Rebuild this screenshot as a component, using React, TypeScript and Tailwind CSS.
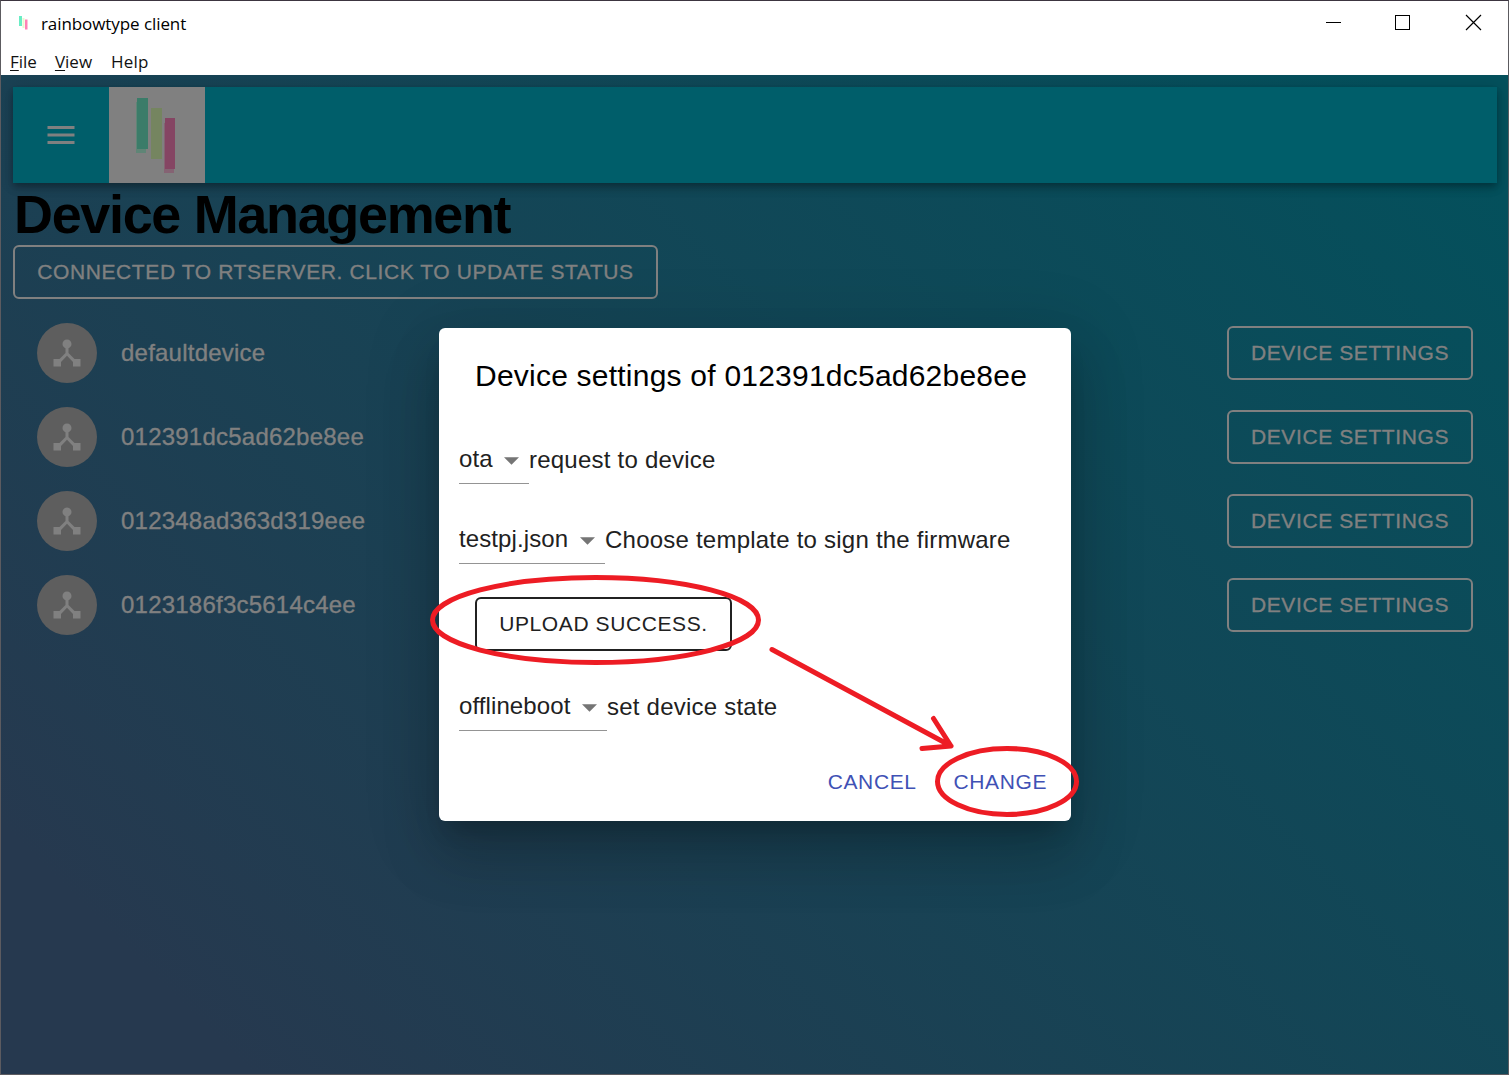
import React from "react";

const devices = ["defaultdevice", "012391dc5ad62be8ee", "012348ad363d319eee", "0123186f3c5614c4ee"];

function Select({ value, label, width }: { value: string; label: string; width: string }) {
  return (
    <div className="flex items-start text-[24px] leading-[29px] tracking-[0.225px] text-[#212121]">
      <div className={`flex h-[40px] items-start justify-between border-b-[1.5px] border-[#949494] ${width}`}>
        <span className="tracking-[0.1px]">{value}</span>
        <svg className="mt-[13px] mr-[10px] h-[8px] w-[15px] shrink-0" viewBox="0 0 15 8">
          <path d="M0 .25h15L7.500 7.750z" fill="#757575" />
        </svg>
      </div>
      <span className="mt-px whitespace-nowrap">{label}</span>
    </div>
  );
}

function BarsLogo() {
  return (
    <svg className="h-24 w-24 bg-[#808080]" viewBox="0 0 96 96">
      <defs>
        <filter id="soft" x="-20%" y="-20%" width="140%" height="140%">
          <feGaussianBlur stdDeviation="0.6" />
        </filter>
      </defs>
      <g filter="url(#soft)">
        <path d="M27 15h10v51H27z" fill="#5e8576" />
        <path d="M28 11h11v51H28z" fill="#3b7c69" />
        <path d="M42 21h11v51H42z" fill="#748560" />
        <path d="M55 36h10v50H55z" fill="#856373" />
        <path d="M56 31h10v51H56z" fill="#854463" />
      </g>
    </svg>
  );
}

export default function App() {
  return (
    <div className="relative flex h-[1075px] w-[1509px] flex-col overflow-hidden border border-[#5c5b60] border-t-[#3c3540] bg-white font-['Liberation_Sans',Arial,sans-serif]">
      <div className="flex h-[46px] shrink-0 items-center justify-between pr-[26px] pl-[18px] text-black">
        <div className="flex items-center">
          <svg className="-mt-[3px] mr-[12px] h-[16px] w-[10px]" viewBox="0 0 10 16">
            <path d="M0 1h3v10H0z" fill="#69edc5" />
            <path d="M3.500 3h2v10h-2z" fill="#e9f7cf" />
            <path d="M6 4.500h2.500v10H6z" fill="#ff80b5" />
          </svg>
          <span className="font-['Open_Sans',sans-serif] text-[17px] tracking-[-0.08px]">rainbowtype client</span>
        </div>
        <svg className="-mt-[3px] h-[17px] w-[156px]" viewBox="0 0 156 17" fill="none" stroke="black">
          <path d="M0 8.500h15M69.500 1.500h14v14h-14z" shapeRendering="crispEdges" />
          <path d="M140 1l15 15M155 1l-15 15" strokeWidth="1.200" />
        </svg>
      </div>
      <div className="flex h-[28px] shrink-0 items-center gap-[18px] pt-px pl-[9px] font-['Open_Sans',sans-serif] text-[17px] text-[#111]">
        <span><u className="underline-offset-2">F</u>ile</span>
        <span><u className="underline-offset-2">V</u>iew</span>
        <span className="ml-px tracking-[0.15px]">Help</span>
      </div>
      <main className="flex min-h-0 flex-1 flex-col bg-[linear-gradient(45deg,#26394f_10%,#04505c_95%)] px-[12px] pt-[12px]">
        <header className="mr-[-1px] flex h-24 shrink-0 bg-[#005e6a] shadow-[0_3px_6px_-1px_rgba(0,0,0,0.2),0_6px_8px_rgba(0,0,0,0.14),0_1px_15px_rgba(0,0,0,0.12)]">
          <div className="flex w-24 items-center justify-center">
            <svg className="h-9 w-9" viewBox="0 0 24 24" fill="#808080">
              <path d="M3 18h18v-2H3v2zm0-5h18v-2H3v2zm0-7v2h18V6H3z" />
            </svg>
          </div>
          <BarsLogo />
        </header>
        <h1 className="h-[62px] pl-[1px] text-[54px] leading-[62px] font-bold tracking-[-1.35px] whitespace-nowrap text-black">Device Management</h1>
        <button className="h-[54px] w-[645px] shrink-0 rounded-[6px] border-2 border-[#808080] text-[21px] tracking-[0.6px] whitespace-nowrap text-[#808080] [-webkit-text-stroke:0.35px_#808080]">
          CONNECTED TO RTSERVER. CLICK TO UPDATE STATUS
        </button>
        <ul className="mt-[12px]">
          {devices.map((d) => (
            <li key={d} className="flex h-[84px] items-center pr-[23px] pl-[24px]">
              <span className="flex h-[60px] w-[60px] items-center justify-center rounded-full bg-[#5e5e5e]">
                <svg className="h-9 w-9" viewBox="0 0 24 24" fill="#808080">
                  <path d="M17 16l-4-4V8.820C14.160 8.400 15 7.300 15 6c0-1.660-1.340-3-3-3S9 4.340 9 6c0 1.300.840 2.400 2 2.820V12l-4 4H3v5h5v-3.050l4-4.200 4 4.200V21h5v-5h-4z" />
                </svg>
              </span>
              <span className="ml-[24px] flex-1 text-[24px] tracking-[0.225px] text-[#808080] [-webkit-text-stroke:0.35px_#808080]">{d}</span>
              <button className="h-[54px] w-[246px] rounded-[6px] border-2 border-[#808080] text-[21px] tracking-[0.6px] text-[#808080] [-webkit-text-stroke:0.35px_#808080]">DEVICE SETTINGS</button>
            </li>
          ))}
        </ul>
      </main>

      <section className="absolute top-[327px] left-[438px] flex h-[493px] w-[632px] flex-col rounded-[6px] bg-white px-[20px] shadow-[0_16px_22px_-10px_rgba(0,0,0,0.2),0_36px_57px_4px_rgba(0,0,0,0.14),0_14px_69px_12px_rgba(0,0,0,0.12)]">
        <h2 className="mt-[24px] h-[48px] pl-[16px] text-[30px] leading-[48px] tracking-[0.225px] whitespace-nowrap text-black">Device settings of 012391dc5ad62be8ee</h2>
        <div className="mt-[44px] h-[80px]"><Select value="ota" label="request to device" width="w-[70px]" /></div>
        <div className="h-[73px]"><Select value="testpj.json" label="Choose template to sign the firmware" width="w-[146px]" /></div>
        <button className="ml-[16px] h-[54px] w-[257px] shrink-0 rounded-[6px] border-2 border-[#212121] text-[21px] tracking-[0.6px] text-[#212121]">UPLOAD SUCCESS.</button>
        <div className="mt-[40px] h-[73px]"><Select value="offlineboot" label="set device state" width="w-[148px]" /></div>
        <div className="mr-[4px] flex justify-end gap-[37px] text-[21px] leading-[36px] tracking-[0.6px] text-[#3f51b5]">
          <button>CANCEL</button>
          <button>CHANGE</button>
        </div>
      </section>

      <svg className="pointer-events-none absolute top-[-1px] left-[-1px] h-[1075px] w-[1509px]" viewBox="0 0 1509 1075" fill="none" stroke="#ed1c24" strokeWidth="5" strokeLinecap="round" strokeLinejoin="round">
        <ellipse cx="595.500" cy="620" rx="163" ry="42.500" />
        <ellipse cx="1007" cy="781.500" rx="69.500" ry="33" />
        <path d="M772 649.500L951 746M933.500 718.500L951 746L922 748.500" />
      </svg>
    </div>
  );
}
